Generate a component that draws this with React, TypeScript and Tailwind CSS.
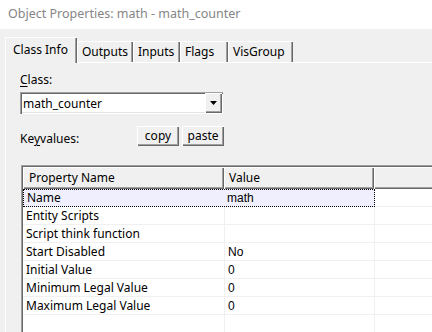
import React from 'react';

const ui = "font-['Noto_Sans',sans-serif]";
const raised = 'shadow-[inset_1px_1px_0_#ffffff,inset_-1px_-1px_0_#696969,inset_-2px_-2px_0_#a0a0a0]';

const rows = [
  { name: 'Name', value: 'math' },
  { name: 'Entity Scripts', value: '' },
  { name: 'Script think function', value: '' },
  { name: 'Start Disabled', value: 'No' },
  { name: 'Initial Value', value: '0' },
  { name: 'Minimum Legal Value', value: '0' },
  { name: 'Maximum Legal Value', value: '0' },
];

const tabs = ['Class Info', 'Outputs', 'Inputs', 'Flags', 'VisGroup'];
const tabWidths = ['w-[72px]', 'w-[56px]', 'w-[47px]', 'w-[48px]', 'w-[65px]'];

export default function App() {
  return (
    <div className={`w-[432px] h-[332px] overflow-hidden bg-[#f0f0f0] flex flex-col text-[12px] text-black ${ui}`}>
      {/* window title */}
      <div className="h-[29px] shrink-0 bg-white flex items-center pl-[8px] text-[12.5px] text-[#858585]">
        Object Properties: math - math_counter
      </div>

      {/* tab strip */}
      <div className="flex items-end h-[33px] shrink-0 pl-[5px]">
        {tabs.map((t, i) =>
          i === 0 ? (
            <div
              key={t}
              className={`${tabWidths[i]} h-[26px] -mb-px relative z-10 bg-[#f0f0f0] border-l border-t border-white shadow-[inset_-1px_0_0_#696969,inset_-2px_0_0_#a0a0a0] flex items-start pt-[3px] pl-[7px] rounded-tl-[2px]`}
            >
              {t}
            </div>
          ) : (
            <div
              key={t}
              className={`${tabWidths[i]} h-[21px] border-l border-t border-white shadow-[inset_-1px_0_0_#696969,inset_-2px_0_0_#a0a0a0] flex items-center pl-[4px] rounded-tl-[2px]`}
            >
              {t}
            </div>
          )
        )}
      </div>

      {/* tab panel */}
      <div className="flex-1 ml-[5px] w-[470px] border-l border-t border-white flex flex-col pl-[14px]">
        <div className="h-[17px] mt-[8px] leading-[17px]">
          <span className="underline underline-offset-2">C</span>lass:
        </div>

        {/* class combobox */}
        <div className="mt-[4px] w-[203px] h-[22px] bg-white flex shadow-[inset_1px_1px_0_#a0a0a0,inset_2px_2px_0_#696969,inset_-1px_-1px_0_#ffffff,inset_-2px_-2px_0_#e3e3e3]">
          <div className="flex-1 flex items-center pl-[3px] pt-[1px]">math_counter</div>
          <div className={`w-[17px] h-[20px] mt-px mr-px bg-[#f0f0f0] ${raised} flex items-center justify-center`}>
            <svg width="7" height="4" viewBox="0 0 7 4">
              <path d="M0 0h7L3.5 4z" fill="#000" />
            </svg>
          </div>
        </div>

        {/* keyvalues row */}
        <div className="mt-[12px] h-[20px] flex items-center">
          <div className="w-[117px] pt-[6px]">
            Ke<span className="underline underline-offset-2">y</span>values:
          </div>
          <div className="flex gap-[3px]">
            <button className={`w-[42px] h-[20px] bg-[#f0f0f0] ${raised} flex items-center justify-center pb-px`}>copy</button>
            <button className={`w-[42px] h-[20px] bg-[#f0f0f0] ${raised} flex items-center justify-center pb-px`}>paste</button>
          </div>
        </div>

        {/* property grid */}
        <div className="mt-[19px] ml-px flex-1 border-l border-t border-[#a0a0a0]">
          <div className="h-full border-l border-t border-[#696969] bg-white flex flex-col">
            <div className="h-[22px] flex shrink-0 bg-[#f0f0f0]">
              <div className={`w-[201px] ${raised} flex items-center pl-[6px]`}>Property Name</div>
              <div className={`w-[150px] ${raised} flex items-center pl-[5px]`}>Value</div>
              <div className={`flex-1 ${raised}`} />
            </div>
            <div className="flex-1 flex flex-col">
              {rows.map((r, i) =>
                i === 0 ? (
                  <div key={r.name} className="h-[18px] flex shrink-0">
                    <div className="w-[352px] flex bg-[#efeffd] border border-dotted border-black">
                      <div className="w-[201px] flex items-center pl-[3px]">{r.name}</div>
                      <div className="flex-1 flex items-center pl-[2px] font-['Liberation_Sans',sans-serif]">{r.value}</div>
                    </div>
                    <div className="flex-1 border-b border-[#f0f0f0]" />
                  </div>
                ) : (
                  <div key={r.name} className="h-[18px] flex shrink-0 border-b border-[#f0f0f0]">
                    <div className="w-[202px] flex items-center pl-[3px] border-r border-[#f0f0f0]">{r.name}</div>
                    <div className="w-[150px] flex items-center pl-[3px] border-r border-[#f0f0f0] font-['Liberation_Sans',sans-serif]">{r.value}</div>
                    <div className="flex-1" />
                  </div>
                )
              )}
              <div className="flex-1 flex">
                <div className="w-[202px] border-r border-[#f0f0f0]" />
                <div className="w-[150px] border-r border-[#f0f0f0]" />
              </div>
            </div>
          </div>
        </div>
      </div>
    </div>
  );
}
